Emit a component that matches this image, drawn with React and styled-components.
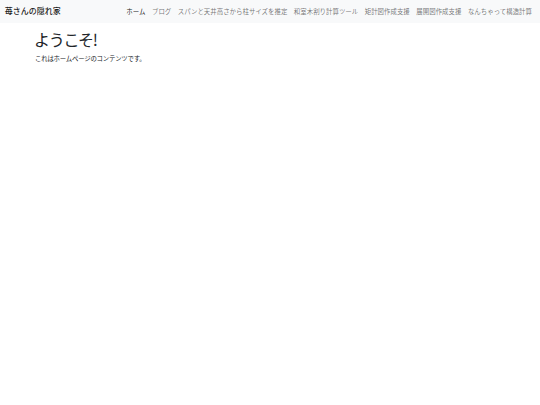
import React from 'react'
import styled, { createGlobalStyle } from 'styled-components';

const GlobalStyle = createGlobalStyle`
  * { box-sizing: border-box; }
  html, body {
    margin: 0;
    background: #fff;
    color: #212529;
    font-family: "Noto Sans CJK JP", "Noto Sans", "Liberation Sans", sans-serif;
    font-size: 6.4px;
    line-height: 1.5;
  }
`

export const Navbar = styled.nav`
  background-color: #f8f9fa;
  height: 22.6px;
  padding: 0 4.8px;
  display: flex;
  align-items: center;
  justify-content: space-between;
`

export const Brand = styled.a`
  font-size: 8px;
  line-height: 12px;
  color: rgba(0, 0, 0, 0.9);
  font-weight: 500;
  text-decoration: none;
  white-space: nowrap;
`

export const NavList = styled.ul`
  display: flex;
  list-style: none;
  margin: 0;
  padding: 0;
`

export const NavLink = styled.a`
  display: block;
  padding: 2px 3.25px;
  font-size: 6.45px;
  line-height: 9.6px;
  white-space: nowrap;
  text-decoration: none;
  color: ${p => (p.$active ? 'rgba(0, 0, 0, 0.9)' : 'rgba(0, 0, 0, 0.55)')};
`

export const Main = styled.main`
  padding: 7px 34px 0;
`

export const Title = styled.h1`
  margin: 0 0 5.5px;
  font-size: 16px;
  line-height: 1.2;
  font-weight: 400;
  letter-spacing: -1.3px;
`

export const Text = styled.p`
  margin: 0;
  font-size: 6.4px;
  line-height: 9.6px;
  letter-spacing: -0.2px;
  padding-left: 1px;
`

const links = [
  'ホーム',
  'ブログ',
  'スパンと天井高さから柱サイズを推定',
  '和室木割り計算ツール',
  '矩計図作成支援',
  '展開図作成支援',
  'なんちゃって構造計算',
]

const App = () => {
  return (
    <>
      <GlobalStyle />
      <Navbar>
        <Brand href="#">苺さんの隠れ家</Brand>
        <NavList>
          {links.map((l, i) => (
            <li key={l}>
              <NavLink href="#" $active={i === 0}>{l}</NavLink>
            </li>
          ))}
        </NavList>
      </Navbar>
      <Main>
        <Title>ようこそ!</Title>
        <Text>これはホームページのコンテンツです。</Text>
      </Main>
    </>
  );
}

export default App;
